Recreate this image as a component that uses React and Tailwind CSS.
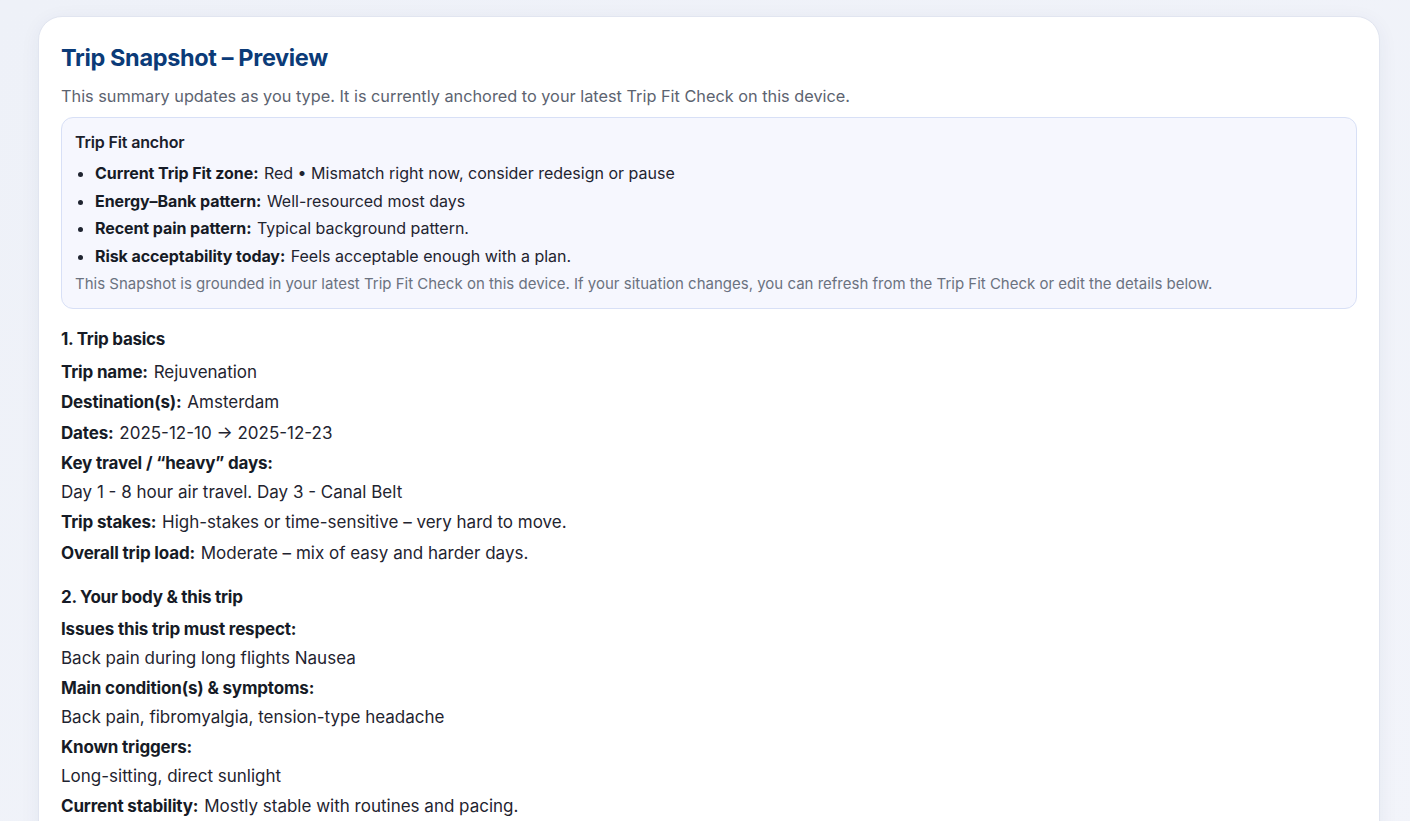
import React from 'react';

const anchorItems = [
  { label: 'Current Trip Fit zone:', value: 'Red • Mismatch right now, consider redesign or pause' },
  { label: 'Energy–Bank pattern:', value: 'Well-resourced most days' },
  { label: 'Recent pain pattern:', value: 'Typical background pattern.' },
  { label: 'Risk acceptability today:', value: 'Feels acceptable enough with a plan.' },
];

const sections = [
  {
    title: '1. Trip basics',
    rows: [
      { label: 'Trip name:', value: 'Rejuvenation' },
      { label: 'Destination(s):', value: 'Amsterdam' },
      { label: 'Dates:', value: '2025-12-10 → 2025-12-23' },
      { label: 'Key travel / “heavy” days:', value: 'Day 1 - 8 hour air travel. Day 3 - Canal Belt', block: true },
      { label: 'Trip stakes:', value: 'High-stakes or time-sensitive – very hard to move.' },
      { label: 'Overall trip load:', value: 'Moderate – mix of easy and harder days.' },
    ],
  },
  {
    title: '2. Your body & this trip',
    rows: [
      { label: 'Issues this trip must respect:', value: 'Back pain during long flights Nausea', block: true },
      { label: 'Main condition(s) & symptoms:', value: 'Back pain, fibromyalgia, tension-type headache', block: true },
      { label: 'Known triggers:', value: 'Long-sitting, direct sunlight', block: true },
      { label: 'Current stability:', value: 'Mostly stable with routines and pacing.' },
    ],
  },
];

function Row({ label, value, block }) {
  if (block) {
    return (
      <div className="mt-[2.5px]">
        <div className="font-bold text-[#161b26] tracking-[-0.01em]">{label}</div>
        <div className="mt-[0.5px]">{value}</div>
      </div>
    );
  }
  return (
    <div className="mt-[2.5px]">
      <span className="mr-[1px] font-bold text-[#161b26] tracking-[-0.01em]">{label}</span> {value}
    </div>
  );
}

export default function App() {
  return (
    <div className="min-h-screen bg-gradient-to-br from-[#eef1f8] to-[#f2f4fa] pl-[38px] pr-[30px] pt-[16px] pb-10 font-['Inter',sans-serif] text-[#1f2430]">
      <div className="rounded-[24px] border border-[#e1e5f0] bg-white px-[22px] pt-[25px] pb-8 shadow-[0_4px_20px_rgba(30,50,110,0.06)]">
        <h1 className="text-[23.5px] leading-[32px] font-bold text-[#0b3b78] tracking-[-0.015em]">
          Trip Snapshot – Preview
        </h1>
        <p className="mt-[10px] text-[16.3px] leading-[24px] text-[#5c6370]">
          This summary updates as you type. It is currently anchored to your latest Trip Fit Check on this device.
        </p>

        <div className="mt-[9px] rounded-[12px] border border-[#d8e0f6] bg-[#f6f7fe] px-[13px] pt-[12px] pb-[13px]">
          <div className="text-[16px] leading-[24px] font-semibold text-[#1a202c] tracking-[-0.01em]">Trip Fit anchor</div>
          <ul className="mt-[6px] list-disc pl-[20px] text-[16px] leading-[27.5px] text-[#1f2430]">
            {anchorItems.map((item) => (
              <li key={item.label}>
                <span className="mr-[1px] font-bold text-[#161b26] tracking-[-0.005em]">{item.label}</span> {item.value}
              </li>
            ))}
          </ul>
          <p className="mt-[3px] text-[15px] leading-[22px] text-[#6b7280]">
            This Snapshot is grounded in your latest Trip Fit Check on this device. If your situation changes, you can refresh from the Trip Fit Check or edit the details below.
          </p>
        </div>

        {sections.map((section) => (
          <div key={section.title} className="mt-[16px]">
            <h2 className="text-[17px] leading-[28px] font-bold text-[#161b26] tracking-[-0.015em]">{section.title}</h2>
            <div className="mt-[4.5px] text-[17px] leading-[28px]">
              {section.rows.map((row) => (
                <Row key={row.label} {...row} />
              ))}
            </div>
          </div>
        ))}
      </div>
    </div>
  );
}
